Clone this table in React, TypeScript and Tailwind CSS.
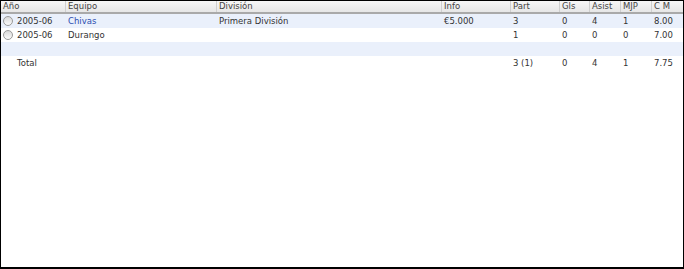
import React from "react";

const cols = "grid grid-cols-[64px_151px_225px_69px_49px_30px_31px_31px_32px]";

const headers = ["Año", "Equipo", "División", "Info", "Part", "Gls", "Asist", "MJP", "C M"];

const rows = [
  { year: "2005-06", team: "Chivas", link: true, div: "Primera División", info: "€5.000", part: "3", gls: "0", asist: "4", mjp: "1", cm: "8.00" },
  { year: "2005-06", team: "Durango", link: false, div: "", info: "", part: "1", gls: "0", asist: "0", mjp: "0", cm: "7.00" },
];

const Radio: React.FC = () => (
  <span className="inline-block w-[10px] h-[10px] rounded-full border border-[#9a9a9a] bg-gradient-to-b from-[#d8d8d8] to-[#fbfbfb] mr-[4px] shrink-0" />
);

const App: React.FC = () => {
  return (
    <div
      className="w-[684px] h-[269px] bg-white border border-black border-b-2 text-[8.5px] text-[#333] leading-none overflow-hidden"
      style={{ fontFamily: "Verdana, 'DejaVu Sans', sans-serif" }}
    >
      <div className={`${cols} h-[13px] bg-gradient-to-b from-[#f7f7f7] to-[#e6e6e6] border-b-2 border-[#a9a9a9]`}>
        {headers.map((h, i) => (
          <div
            key={h}
            className={`flex items-center h-full pl-[2px] text-[#444] ${i > 0 ? "border-l border-[#cfcfcf]" : ""}`}
          >
            {h}
          </div>
        ))}
      </div>

      {rows.map((r, i) => (
        <div key={i} className={`${cols} h-[14px] items-center ${i % 2 === 0 ? "bg-[#eaf0fb]" : "bg-white"}`}>
          <div className="flex items-center pl-[2px]">
            <Radio />
            {r.year}
          </div>
          <div className={`pl-[3px] ${r.link ? "text-[#2a4eb0]" : ""}`}>{r.team}</div>
          <div className="pl-[3px]">{r.div}</div>
          <div className="pl-[3px]">{r.info}</div>
          <div className="pl-[3px]">{r.part}</div>
          <div className="pl-[3px]">{r.gls}</div>
          <div className="pl-[3px]">{r.asist}</div>
          <div className="pl-[3px]">{r.mjp}</div>
          <div className="pl-[3px]">{r.cm}</div>
        </div>
      ))}

      <div className="h-[14px] bg-[#eaf0fb]" />

      <div className={`${cols} h-[14px] items-center`}>
        <div className="pl-[16px]">Total</div>
        <div />
        <div />
        <div />
        <div className="pl-[3px]">3 (1)</div>
        <div className="pl-[3px]">0</div>
        <div className="pl-[3px]">4</div>
        <div className="pl-[3px]">1</div>
        <div className="pl-[3px]">7.75</div>
      </div>
    </div>
  );
};

export default App;
